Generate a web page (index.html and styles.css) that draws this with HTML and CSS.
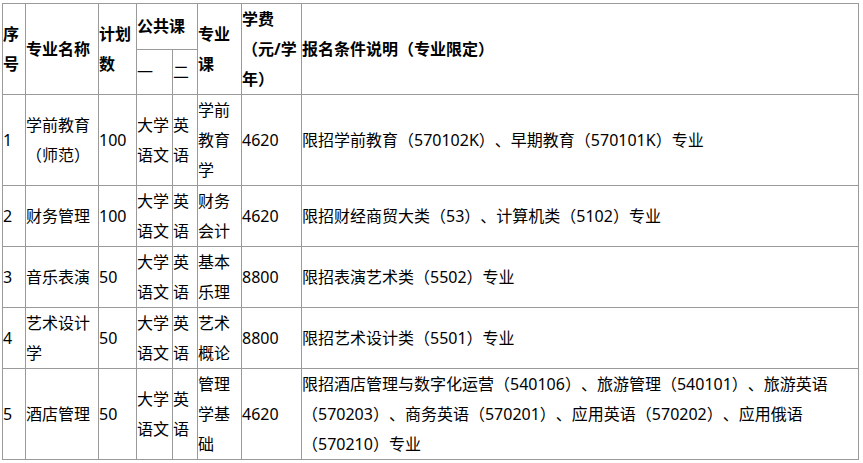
FILE: index.html
```html
<!DOCTYPE html>
<html lang="zh-CN">
<head>
<meta charset="utf-8">
<link rel="stylesheet" href="styles.css">
</head>
<body>
<table class="plan">
  <colgroup>
    <col class="c-no">
    <col class="c-name">
    <col class="c-num">
    <col class="c-pub1">
    <col class="c-pub2">
    <col class="c-major">
    <col class="c-fee">
    <col class="c-cond">
  </colgroup>
  <thead>
    <tr>
      <th rowspan="2">序号</th>
      <th rowspan="2">专业名称</th>
      <th rowspan="2">计划数</th>
      <th colspan="2">公共课</th>
      <th rowspan="2">专业课</th>
      <th rowspan="2">学费（元/学年）</th>
      <th rowspan="2">报名条件说明（专业限定）</th>
    </tr>
    <tr>
      <th class="sub">一</th>
      <th class="sub">二</th>
    </tr>
  </thead>
  <tbody>
    <tr>
      <td>1</td>
      <td>学前教育（师范）</td>
      <td>100</td>
      <td>大学语文</td>
      <td>英语</td>
      <td>学前教育学</td>
      <td>4620</td>
      <td>限招学前教育（570102K）、早期教育（570101K）专业</td>
    </tr>
    <tr>
      <td>2</td>
      <td>财务管理</td>
      <td>100</td>
      <td>大学语文</td>
      <td>英语</td>
      <td>财务会计</td>
      <td>4620</td>
      <td>限招财经商贸大类（53）、计算机类（5102）专业</td>
    </tr>
    <tr>
      <td>3</td>
      <td>音乐表演</td>
      <td>50</td>
      <td>大学语文</td>
      <td>英语</td>
      <td>基本乐理</td>
      <td>8800</td>
      <td>限招表演艺术类（5502）专业</td>
    </tr>
    <tr>
      <td>4</td>
      <td>艺术设计学</td>
      <td>50</td>
      <td>大学语文</td>
      <td>英语</td>
      <td>艺术概论</td>
      <td>8800</td>
      <td>限招艺术设计类（5501）专业</td>
    </tr>
    <tr>
      <td>5</td>
      <td>酒店管理</td>
      <td>50</td>
      <td>大学语文</td>
      <td>英语</td>
      <td>管理学基础</td>
      <td>4620</td>
      <td>限招酒店管理与数字化运营（540106）、旅游管理（540101）、旅游英语（570203）、商务英语（570201）、应用英语（570202）、应用俄语（570210）专业</td>
    </tr>
  </tbody>
</table>
</body>
</html>
```

FILE: styles.css
```css
html, body {
  margin: 0;
  padding: 0;
  background: #fff;
}

body {
  font-family: "Noto Sans", "Noto Sans CJK SC", sans-serif;
  font-size: 16px;
  color: #000;
  text-spacing-trim: space-all;
}

.plan {
  border-collapse: collapse;
  table-layout: fixed;
  width: 857px;
  margin: 3px 0 0 2px;
}

.c-no { width: 23px; }
.c-name { width: 73px; }
.c-num { width: 38px; }
.c-pub1 { width: 36px; }
.c-pub2 { width: 25px; }
.c-major { width: 44px; }
.c-fee { width: 60px; }
.c-cond { width: 557px; }

.plan th,
.plan td {
  border: 1px solid #9a9a9a;
  padding: 0;
  line-height: 30px;
  text-align: left;
  vertical-align: middle;
  word-break: normal;
  text-spacing-trim: space-all;
}

.plan th {
  font-weight: bold;
}

.plan th.sub {
  font-weight: normal;
}
```
